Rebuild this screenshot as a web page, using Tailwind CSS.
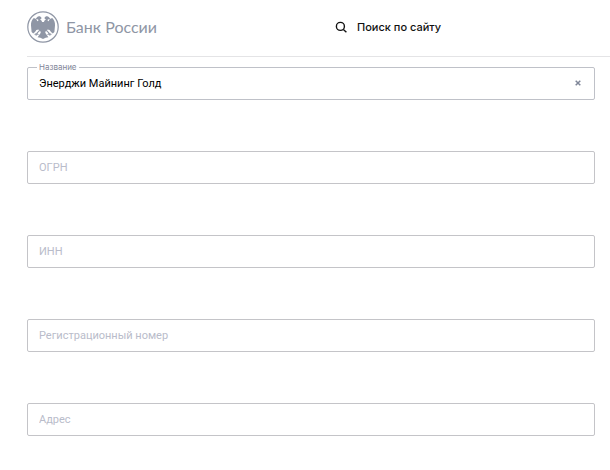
<!DOCTYPE html>
<html lang="ru">

<head>
    <meta charset="UTF-8">
    <meta name="viewport" content="width=device-width, initial-scale=1.0">
    <script src="https://cdn.jsdelivr.net/npm/@tailwindcss/browser@4"></script>
    <title>Банк России</title>
</head>

<body class="bg-white text-black font-['Inter','Liberation_Sans',sans-serif] text-[11px]">
    <header class="ml-[27px] h-[57px] flex items-center border-b border-[#e4e4e6]">
        <a href="#" class="flex items-center gap-[7px] w-[308px] pb-[2px] text-[#8f96a5]">
            <svg class="w-8 h-8" viewBox="0 0 32 32" aria-hidden="true">
                <circle cx="16" cy="16" r="15.2" fill="none" stroke="currentColor" stroke-width="1.2" />
                <!-- double-headed eagle: heads and wings, then tail, then claws -->
                <g fill="currentColor">
                    <path d="M15 11C14.8 9.6 14.2 9 13 8.8L14.6 7.2C13.8 5 11.4 4.6 10 6.2L8.6 8L11.2 8.4C11.6 9.4 11.2 10 10.4 10.2C9.6 8.4 8.4 7.4 6.8 7C4.8 8.8 3.8 11.4 4 14.4L4.6 21L6.2 22.4L8 21L9.4 19L11.4 18.4L13 20.4H19L20.6 18.4L22.6 19L24 21L25.8 22.4L27.4 21L28 14.4C28.2 11.4 27.2 8.8 25.2 7C23.6 7.4 22.4 8.4 21.6 10.2C20.8 10 20.4 9.4 20.8 8.4L23.4 8L22 6.2C20.6 4.6 18.2 5 17.4 7.2L19 8.8C17.8 9 17.2 9.6 17 11Z" />
                    <path d="M14 19H18L18.4 22L21.4 26.2L18.6 26.8L16 28L13.4 26.8L10.6 26.2L13.6 22Z" />
                </g>
                <g fill="none" stroke="currentColor" stroke-width="1.1">
                    <path d="M12.6 19.4L9.8 22.4M9.8 22.4L7.6 23.4M9.8 22.4L9 24.6M9.8 22.4L11.4 23.8" />
                    <path d="M19.4 19.4L22.2 22.4M22.2 22.4L24.4 23.4M22.2 22.4L23 24.6M22.2 22.4L20.6 23.8" />
                </g>
            </svg>
            <span class="font-['Lato','Noto_Sans',sans-serif] text-base leading-5">Банк России</span>
        </a>
        <button type="button" class="flex items-center gap-[10px] pb-[2px] font-medium text-[#111111]">
            <svg class="w-3 h-3" viewBox="0 0 12 12" fill="none" stroke="currentColor" stroke-width="1.4" aria-hidden="true">
                <circle cx="5.4" cy="5.4" r="4" />
                <path d="M8.4 8.4L11.4 11.2" />
            </svg>
            Поиск по сайту
        </button>
    </header>

    <form onsubmit="return false" class="ml-[27px] mr-[15px] mt-[10px] mb-[34px] flex flex-col gap-[51px] font-['Roboto','Liberation_Sans',sans-serif]">
        <div class="relative">
            <label for="name" class="absolute left-[10px] -top-[5px] px-[2px] bg-white font-['Inter','Liberation_Sans',sans-serif] text-[8px] leading-[10px] text-[#7f8698]">Название</label>
            <input type="text" id="name" value="Энерджи Майнинг Голд"
                class="block w-full h-[33px] pl-[11px] pr-8 rounded-[2px] border border-[#bfc1c8] focus:outline-none">
            <button type="button" aria-label="Очистить" class="absolute right-[14px] top-[13px] text-[#7f8698]">
                <svg class="w-[6px] h-[6px]" viewBox="0 0 6 6" fill="none" stroke="currentColor" stroke-width="1.5">
                    <path d="M.7 .7L5.3 5.3M5.3 .7L.7 5.3" />
                </svg>
            </button>
        </div>
        <input type="text" aria-label="ОГРН" placeholder="ОГРН"
            class="w-full h-[33px] px-[11px] rounded-[2px] border border-[#c4c4c8] placeholder:text-[#b9bcca] focus:outline-none">
        <input type="text" aria-label="ИНН" placeholder="ИНН"
            class="w-full h-[33px] px-[11px] rounded-[2px] border border-[#c4c4c8] placeholder:text-[#b9bcca] focus:outline-none">
        <input type="text" aria-label="Регистрационный номер" placeholder="Регистрационный номер"
            class="w-full h-[33px] px-[11px] rounded-[2px] border border-[#c4c4c8] placeholder:text-[#b9bcca] focus:outline-none">
        <input type="text" aria-label="Адрес" placeholder="Адрес"
            class="w-full h-[33px] px-[11px] rounded-[2px] border border-[#c4c4c8] placeholder:text-[#b9bcca] focus:outline-none">
    </form>
</body>

</html>
